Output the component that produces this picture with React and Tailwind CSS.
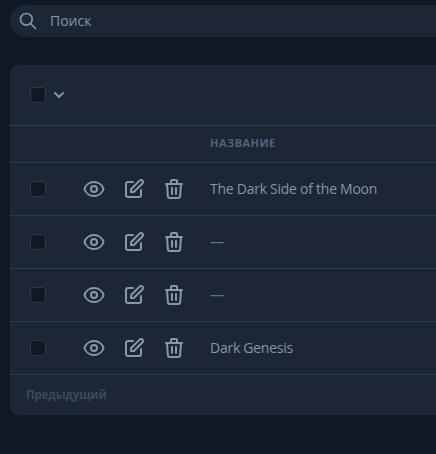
import React from 'react';

const Icon = ({ children, className = 'size-6' }) => (
  <svg className={`${className} shrink-0`} viewBox="0 0 24 24" fill="none" stroke="currentColor" strokeWidth="2" strokeLinecap="round" strokeLinejoin="round">
    {children}
  </svg>
);

const Checkbox = () => (
  <span className="block size-4 shrink-0 rounded border border-[#2b394a] bg-[#101725]" />
);

const Row = ({ name }) => (
  <div className="flex h-[53px] items-center border-b border-[#2d3a4a] pl-5">
    <Checkbox />
    <div className="ml-9 flex w-32 shrink-0 gap-4 text-[#8697ae]">
      <Icon>
        <path d="M15 12a3 3 0 11-6 0 3 3 0 016 0z" />
        <path d="M2.458 12C3.732 7.943 7.523 5 12 5c4.478 0 8.268 2.943 9.542 7-1.274 4.057-5.064 7-9.542 7-4.477 0-8.268-2.943-9.542-7z" />
      </Icon>
      <Icon>
        <path d="M11 5H6a2 2 0 00-2 2v11a2 2 0 002 2h11a2 2 0 002-2v-5m-1.414-9.414a2 2 0 112.828 2.828L11.828 15H9v-2.828l8.586-8.586z" />
      </Icon>
      <Icon>
        <path d="M19 7l-.867 12.142A2 2 0 0116.138 21H7.862a2 2 0 01-1.995-1.858L5 7m5 4v6m4-6v6m1-10V4a1 1 0 00-1-1h-4a1 1 0 00-1 1v3M4 7h16" />
      </Icon>
    </div>
    {name ? (
      <span className="whitespace-nowrap pb-0.5 text-[14px] tracking-[-0.26px]">{name}</span>
    ) : (
      <span className="pb-0.5 text-[14px] text-[#617286]">—</span>
    )}
  </div>
);

export default function App() {
  return (
    <div className="h-[454px] w-[436px] overflow-hidden bg-[#101725] pl-2.5 pt-[5px] font-['Open_Sans','Noto_Sans',sans-serif] text-[#8295ab]">
      <div className="flex h-8 items-center rounded-l-full bg-[#1d2635] pl-2">
        <Icon className="size-5">
          <path d="M21 21l-6-6m2-5a7 7 0 11-14 0 7 7 0 0114 0z" />
        </Icon>
        <span className="ml-3 text-[14px] leading-5">Поиск</span>
      </div>
      <div className="mt-7 h-[350px] rounded-l-lg bg-[#1d2635]">
        <div className="flex h-[61px] items-center gap-2 border-b border-[#344152] pl-5">
          <Checkbox />
          <svg className="h-1.5 w-2.5" viewBox="0 0 10 6" fill="currentColor">
            <path d="M8.293.293a1 1 0 011.414 1.414l-4 4a1 1 0 01-1.414 0l-4-4A1 1 0 011.707.293L5 3.586 8.293.293z" />
          </svg>
        </div>
        <div className="flex h-[37px] items-center border-b border-[#2d3a4a] pb-0.5 pl-[200px] text-[11px] font-bold tracking-[0.5px] text-[#52637a]">
          НАЗВАНИЕ
        </div>
        <Row name="The Dark Side of the Moon" />
        <Row />
        <Row />
        <Row name="Dark Genesis" />
        <div className="flex h-10 items-center pl-4 text-[11.5px] font-bold tracking-[-0.15px] text-[#3c4959]">Предыдущий</div>
      </div>
    </div>
  );
}
